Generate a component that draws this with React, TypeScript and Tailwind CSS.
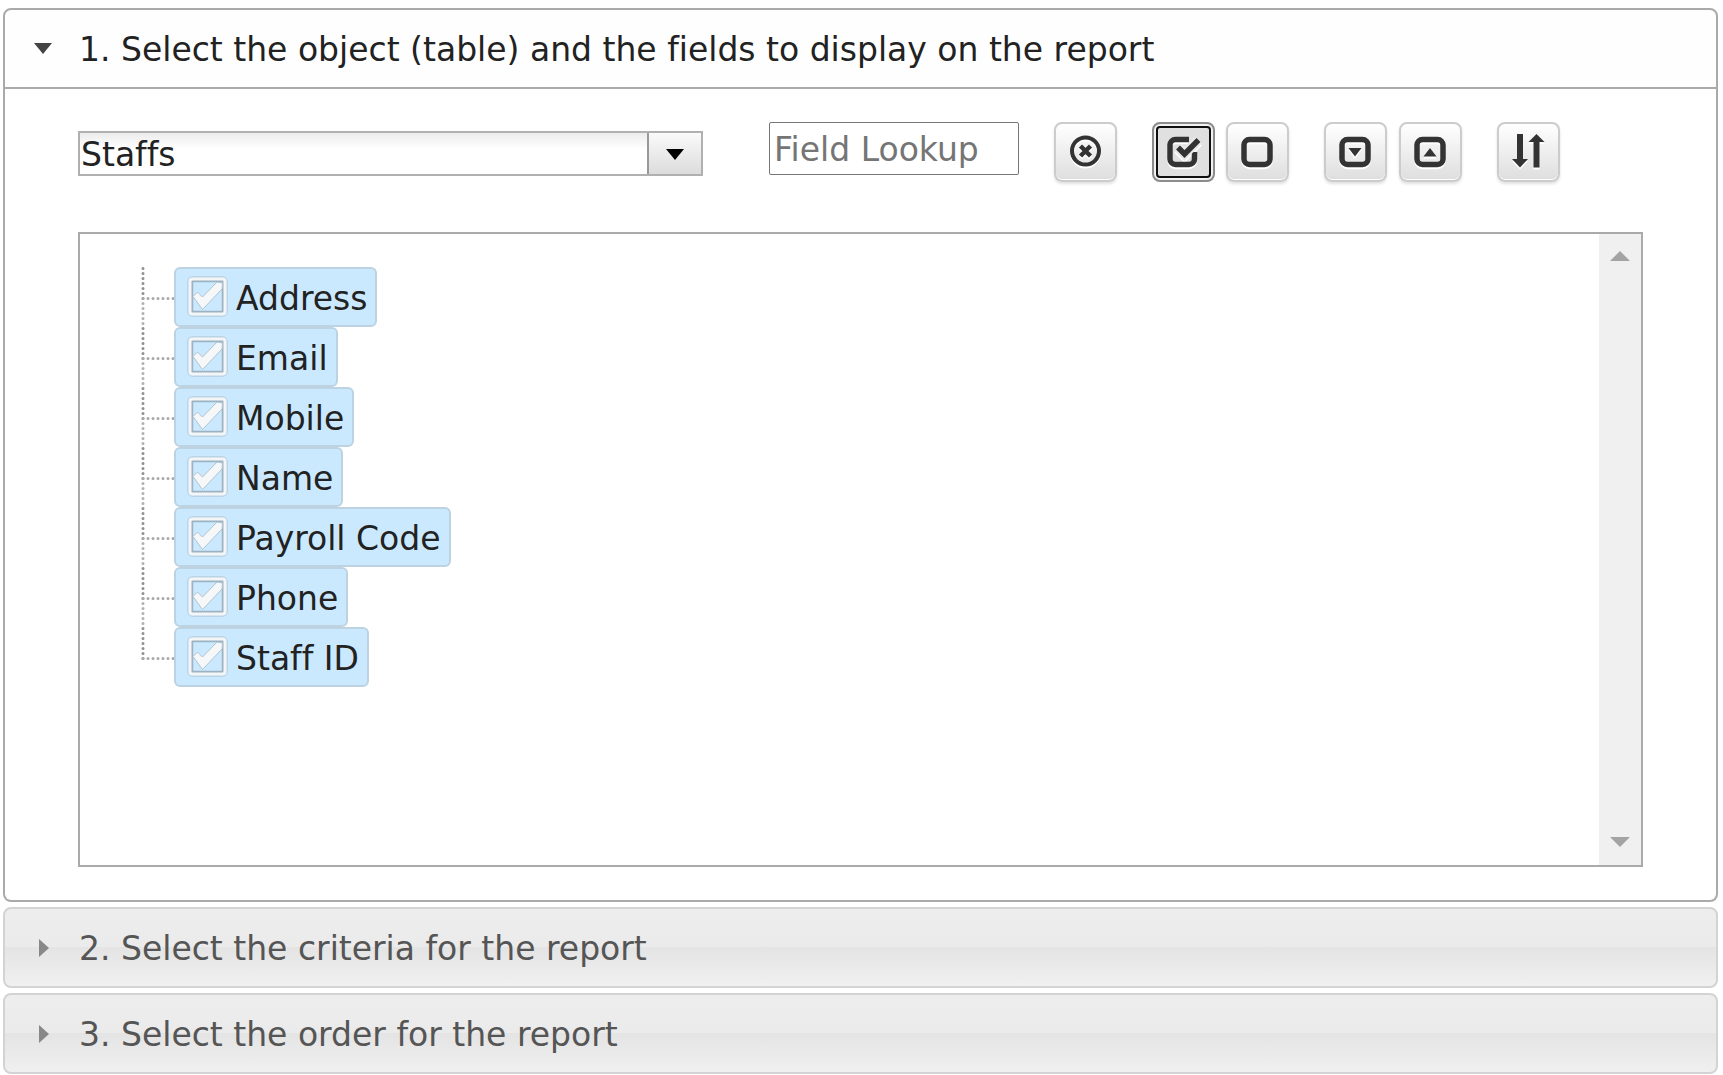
import { useState } from "react";
import type { ReactNode } from "react";
import clsx from "clsx";

const fields = [
	"Address",
	"Email",
	"Mobile",
	"Name",
	"Payroll Code",
	"Phone",
	"Staff ID"
];

const Icon = ({ children }: { children: ReactNode }) => (
	<svg
		viewBox="0 0 36 36"
		className="size-9 drop-shadow-[0_2px_0_#fff]"
		fill="none"
		stroke="#333"
		aria-hidden="true"
	>
		{children}
	</svg>
);

const Square = () => (
	<rect x="4" y="5.5" width="26" height="25" rx="5.5" strokeWidth="5.5" />
);

interface ToolButtonProps {
	label: string;
	active?: boolean;
	onClick?: () => void;
	children: ReactNode;
}

const ToolButton = ({ label, active, onClick, children }: ToolButtonProps) => (
	<button
		type="button"
		aria-label={label}
		onClick={onClick}
		className={clsx(
			"flex h-[60px] w-[63px] items-center justify-center rounded-lg border-2",
			active
				? "border-[#8c8c8c] bg-[#e0e0e0] outline-2 -outline-offset-6 outline-[#101010] shadow-[inset_0_0_0_3px_#f2f2f2]"
				: "border-[#ccc] bg-linear-to-b from-white to-[#dedede] shadow-[0_2px_3px_rgba(0,0,0,0.12),inset_0_-1px_0_#fff]"
		)}
	>
		<Icon>{children}</Icon>
	</button>
);

const TreeLines = ({ last }: { last: boolean }) => (
	<svg
		viewBox="0 0 33 60"
		className="h-[60px] w-[33px] shrink-0"
		fill="none"
		strokeWidth="3"
		strokeLinecap="round"
		strokeDasharray="0 5"
		aria-hidden="true"
	>
		<path d="M2 1.5V32" stroke="#8f8f8f" />
		<path d="M2 31.5H33" stroke="#a8a8a8" />
		{!last && <path d="M2 36.5V57" stroke="#b0b0b0" />}
	</svg>
);

const CheckMark = ({ checked }: { checked: boolean }) => (
	<svg viewBox="0 0 41 41" className="mb-1.5 size-[41px]" fill="none" aria-hidden="true">
		<rect x="1" y="1" width="39" height="39" rx="5" stroke="#9fb4c2" strokeOpacity="0.4" strokeWidth="2" />
		<rect x="5" y="5" width="31" height="31" stroke="#9db3c2" strokeWidth="2.5" />
		<rect x="3" y="3" width="35" height="35" rx="2.5" stroke="#f4f5f6" strokeWidth="3" />
		{checked && (
			<path
				d="M6 20.5 10.5 16 15.5 21 30 6 35.500 7 35 13 15.500 33.500Z"
				fill="#f6f7f8"
				stroke="#b0c3d0"
				strokeWidth="1"
				strokeLinejoin="round"
			/>
		)}
	</svg>
);

const headerClass =
	"flex h-[81px] w-full items-center gap-[26px] border-2 pt-[2px] pl-7 text-left";

const ClosedSection = ({ title }: { title: string }) => (
	<h3>
		<button
			type="button"
			aria-expanded="false"
			className={clsx(
				headerClass,
				"rounded-lg border-[#d3d3d3] bg-[linear-gradient(#ededed_0%,#ebebeb_49%,#e4e4e4_50%,#f0f0f0_100%)] text-[#555]"
			)}
		>
			<svg viewBox="0 0 20 20" className="size-5" aria-hidden="true">
				<path d="M6 0 16 9 6 18Z" fill="#888" />
			</svg>
			{title}
		</button>
	</h3>
);

const App = () => {
	const [selected, setSelected] = useState(fields);
	const [lookup, setLookup] = useState("");

	const toggle = (field: string) =>
		setSelected((current) =>
			current.includes(field)
				? current.filter((item) => item !== field)
				: [...current, field]
		);

	const visible = fields.filter((field) =>
		field.toLowerCase().includes(lookup.toLowerCase())
	);

	return (
		<main className="flex flex-col gap-[5px] bg-white pt-2 pr-[5px] pl-[3px] font-['Verdana','DejaVu_Sans',sans-serif] text-[33px] leading-10 text-[#222] [font-variant-ligatures:none]">
			<section>
				<h3>
					<button
						type="button"
						aria-expanded="true"
						className={clsx(headerClass, "rounded-t-lg border-[#aaa] bg-[#fefefe]")}
					>
						<svg viewBox="0 0 20 20" className="size-5" aria-hidden="true">
							<path d="M1 3H19L10 14Z" fill="#444" />
						</svg>
						1. Select the object (table) and the fields to display on the report
					</button>
				</h3>
				<div className="rounded-b-lg border-2 border-t-0 border-[#aaa] px-[73px] pt-[33px] pb-[33px]">
					<div className="flex items-start">
						<div className="mt-[9px] mr-[66px] grid h-[45px] w-[625px] border-2 border-[#b0b0b0]">
							<select
								aria-label="Object"
								className="col-start-1 row-start-1 appearance-none bg-linear-to-b from-[#ececec] to-white to-40% pt-[2px] pl-px leading-9"
							>
								<option>Staffs</option>
							</select>
							<span className="pointer-events-none col-start-1 row-start-1 flex w-[54px] items-center justify-center justify-self-end border-l-2 border-[#999] bg-linear-to-b from-[#fafafa] to-[#dcdcdc]">
								<svg viewBox="0 0 20 20" className="size-5" aria-hidden="true">
									<path d="M1 5H19L10 16Z" fill="#000" />
								</svg>
							</span>
						</div>
						<input
							type="text"
							aria-label="Field Lookup"
							placeholder="Field Lookup"
							value={lookup}
							onChange={(e) => setLookup(e.target.value)}
							className="mr-[35px] h-[53px] w-[250px] rounded-xs border border-[#767676] px-1 pt-[2px] placeholder:text-[#757575]"
						/>
						<div className="flex gap-[35px]">
							<ToolButton label="Clear lookup" onClick={() => setLookup("")}>
								<circle cx="17.5" cy="17" r="13.5" strokeWidth="4" />
								<path d="m12.5 12 10 10m0-10-10 10" strokeWidth="4.5" />
							</ToolButton>
							<div className="flex gap-[11px]">
								<ToolButton label="Select all" active onClick={() => setSelected(fields)}>
									<path
										d="M23 5.5H9.500a5.500 5.500 0 0 0-5.500 5.500V25a5.500 5.500 0 0 0 5.500 5.500H23a5.500 5.500 0 0 0 5.500-5.500V18"
										strokeWidth="5.5"
									/>
									<path d="m12 13.500 6.500 6.500L32.500 6" stroke="#e8e8e8" strokeWidth="10" />
									<path d="m12 13.500 6.500 6.500L32.500 6" strokeWidth="5.5" />
								</ToolButton>
								<ToolButton label="Select none" onClick={() => setSelected([])}>
									<Square />
								</ToolButton>
							</div>
							<div className="flex gap-3">
								<ToolButton label="Expand all">
									<Square />
									<path d="M10.5 14H23.500L17 22.500Z" fill="#333" stroke="none" />
								</ToolButton>
								<ToolButton label="Collapse all">
									<Square />
									<path d="M10.5 22.500H23.500L17 14Z" fill="#333" stroke="none" />
								</ToolButton>
							</div>
							<ToolButton label="Sort">
								<path
									d="M6 0H12V25H17L9 33.500 1 25H6ZM22.500 33.500V8H17.500L25.500 0 33.500 8H28.500V33.500Z"
									fill="#333"
									stroke="none"
								/>
							</ToolButton>
						</div>
					</div>

					<div className="mt-[50px] flex h-[635px] border-2 border-[#aaa]">
						<ul className="flex-1 pt-[33px] pl-[61px]">
							{visible.map((field, index) => (
								<li key={field} className="flex">
									<TreeLines last={index === visible.length - 1} />
									<label
										className={clsx(
											"flex h-[60px] items-center gap-2 rounded-md border-2 pt-1 pr-2 pl-[11px]",
											selected.includes(field)
												? "border-[#bdd3e1] bg-[#cbe9fe]"
												: "border-transparent"
										)}
									>
										<input
											type="checkbox"
											checked={selected.includes(field)}
											onChange={() => toggle(field)}
											className="sr-only"
										/>
										<CheckMark checked={selected.includes(field)} />
										{field}
									</label>
								</li>
							))}
						</ul>
						<div
							className="flex w-[42px] flex-col items-center justify-between bg-[#f0f0f0] pt-[17px] pb-[18px]"
							aria-hidden="true"
						>
							<svg viewBox="0 0 20 10" className="h-[10px] w-5">
								<path d="M0 10 10 0 20 10Z" fill="#a3a3a3" />
							</svg>
							<svg viewBox="0 0 20 10" className="h-[10px] w-5">
								<path d="M0 0H20L10 10Z" fill="#a3a3a3" />
							</svg>
						</div>
					</div>
				</div>
			</section>
			<ClosedSection title="2. Select the criteria for the report" />
			<ClosedSection title="3. Select the order for the report" />
		</main>
	);
};

export default App;
